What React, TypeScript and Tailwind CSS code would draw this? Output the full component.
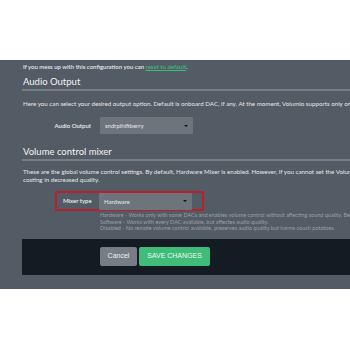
import React from "react";

function Select({ value }: { value: string }) {
  return (
    <div className="w-[93px] h-[17px] bg-[#6d747c] rounded-[1px] flex items-center justify-between pl-[5px] pr-[5px]">
      <span className="text-[6px] text-[#e8eaec]">{value}</span>
      <span className="w-0 h-0 border-l-[2px] border-r-[2px] border-t-[2px] border-l-transparent border-r-transparent border-t-[#111]" />
    </div>
  );
}

export default function App() {
  return (
    <div className="w-[350px] h-[350px] bg-white overflow-hidden" style={{ fontFamily: "Lato, 'Open Sans', sans-serif" }}>
      <div className="mt-[60px] h-[229px] bg-[#535b64] overflow-hidden flex flex-col">
        <div className="pl-[23px] pt-[3px] h-[10px] text-[6px] leading-[7px] text-[#e6e8ea] font-semibold whitespace-nowrap">
          If you mess up with this configuration you can{" "}
          <span className="text-[#3fbc7a] underline">reset to default</span>.
        </div>
        <div className="ml-[22px] mt-[6px] h-[15px] border-b-2 border-[#767d85] text-[9.5px] leading-[12px] text-[#f2f3f4] pl-[1px] whitespace-nowrap">
          Audio Output
        </div>
        <div className="pl-[23px] mt-[9px] text-[6.2px] leading-[7px] text-[#e6e8ea] whitespace-nowrap">
          Here you can select your desired output option. Default is onboard DAC, if any. At the moment, Volumio supports only one output device.
        </div>
        <div className="mt-[10px] flex items-center h-[17px]">
          <div className="w-[91px] pr-[0px] text-right text-[6px] text-[#eef0f1] font-semibold whitespace-nowrap">Audio Output</div>
          <div className="ml-[9px]"><Select value="sndrpihifiberry" /></div>
        </div>
        <div className="ml-[22px] mt-[12px] h-[15px] border-b-2 border-[#767d85] text-[9.5px] leading-[12px] text-[#f2f3f4] pl-[1px] whitespace-nowrap">
          Volume control mixer
        </div>
        <div className="pl-[23px] mt-[7px] text-[6.2px] leading-[8px] text-[#e6e8ea] whitespace-nowrap">
          <div>These are the global volume control settings. By default, Hardware Mixer is enabled. However, if you cannot set the Volume, use Software Mixer,</div>
          <div>costing in decreased quality.</div>
        </div>
        <div className="mt-[7px] ml-[55px] w-[149px] h-[20px] border-2 border-[#b8212a] flex items-center">
          <div className="w-[42px] pl-[6px] text-[6px] text-[#eef0f1] font-semibold whitespace-nowrap self-start pt-[3px]">Mixer type</div>
          <Select value="Hardware" />
        </div>
        <div className="pl-[100px] mt-[1px] text-[5.5px] leading-[6.5px] text-[#9ba1a8] whitespace-nowrap">
          <div>Hardware - Works only with some DACs and enables volume control without affecting sound quality. Best choice.</div>
          <div>Software - Works with every DAC available, but affectes audio quality.</div>
          <div>Disabled - No remote volume control available, preserves audio quality but harms couch potatoes.</div>
        </div>
        <div className="ml-[22px] mt-[7px] h-[36px] bg-[#151b22] flex items-center pl-[78px] gap-[2px]">
          <div className="w-[37px] h-[19px] rounded-[2px] bg-[#767d86] text-[7px] text-[#eef0f1] flex items-center justify-center" style={{ fontFamily: "'Liberation Sans', Arial, sans-serif" }}>Cancel</div>
          <div className="w-[71px] h-[19px] rounded-[2px] bg-[#3fbc7a] text-[7px] text-[#eef8f2] flex items-center justify-center" style={{ fontFamily: "'Liberation Sans', Arial, sans-serif" }}>SAVE CHANGES</div>
        </div>
      </div>
    </div>
  );
}
